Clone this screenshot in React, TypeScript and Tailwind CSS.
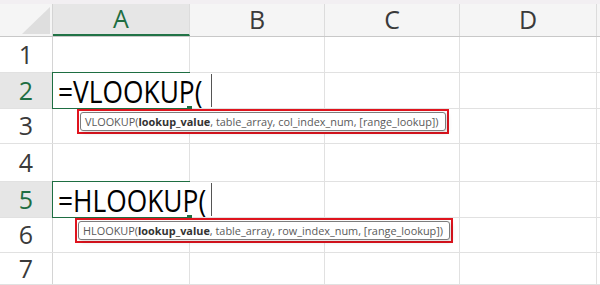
import React from "react";

const colWidths = ["w-[137px]", "w-[135px]", "w-[135px]", "w-[137px]"];
const letters = ["A", "B", "C", "D"];

type RowDef = {
  n: number;
  h: string;
  active?: boolean;
  formula?: string;
};

const rows: RowDef[] = [
  { n: 1, h: "h-[36px]" },
  { n: 2, h: "h-[36px]", active: true, formula: "=VLOOKUP(" },
  { n: 3, h: "h-[35px]" },
  { n: 4, h: "h-[38px]" },
  { n: 5, h: "h-[36px]", active: true, formula: "=HLOOKUP(" },
  { n: 6, h: "h-[35px]" },
  { n: 7, h: "h-[32px]" },
];

const uiFont = { fontFamily: "'Open Sans', 'Noto Sans', sans-serif" };

const Tooltip: React.FC<{ fn: string; third: string; className: string }> = ({ fn, third, className }) => (
  <div className={`absolute z-20 border-2 border-[#e0141e] p-[1px] bg-white ${className}`}>
    <div
      className="whitespace-nowrap rounded-[3px] border border-[#7d7d7d] bg-white pl-[4px] pr-[6px] text-[10.9px] leading-[17px] text-[#5a5a5a] shadow-[2px_2px_4px_rgba(0,0,0,0.15)]"
      style={uiFont}
    >
      {fn}(<span className="font-bold text-[#333]">lookup_value</span>, table_array, {third}, [range_lookup])
    </div>
  </div>
);

const App: React.FC = () => {
  return (
    <div className="relative h-[285px] w-[600px] overflow-hidden bg-white select-none">
      <div className="h-[4px] bg-[#f2eff2]" />

      {/* column headers */}
      <div className="flex h-[33px] border-b border-[#c8c8c8] bg-[#f5f5f5]">
        <div className="relative w-[53px] shrink-0 border-r border-[#d4d4d4]">
          <svg className="absolute right-[2px] bottom-[2px]" width="28" height="27" viewBox="0 0 28 27">
            <polygon points="28,0 28,27 0,27" fill="#dedede" />
          </svg>
        </div>
        {letters.map((l, i) => (
          <div
            key={l}
            className={`${colWidths[i]} shrink-0 flex items-center justify-center border-r border-[#dcdcdc] text-[25px] ${
              i === 0 ? "bg-[#e6e6e6] text-[#1e6e42] border-b-2 border-b-[#217346]" : "text-[#3a3a3a]"
            }`}
            style={uiFont}
          >
            {l}
          </div>
        ))}
        <div className="flex-1" />
      </div>

      {rows.map((r) => (
        <div key={r.n} className={`flex ${r.h} border-b border-[#e1e1e1]`}>
          <div
            className={`w-[53px] shrink-0 flex items-center justify-center border-r border-[#d4d4d4] text-[25px] ${
              r.active ? "bg-[#e6e6e6] text-[#1e6e42]" : "bg-white text-[#3a3a3a]"
            }`}
            style={uiFont}
          >
            {r.n}
          </div>
          <div className={`relative ${colWidths[0]} shrink-0 ${r.active ? "z-10" : "border-r border-[#e1e1e1]"}`}>
            {r.formula && (
              <>
                {/* active cell frame, right edge hidden under the overflowing text */}
                <div className="absolute left-[-1px] top-[-1px] bottom-[-1px] right-0 border-y border-l border-[#1e6e42]" />
                <div
                  className="absolute left-[5px] top-[1px] origin-left scale-x-[0.85] whitespace-nowrap text-[31px] leading-[34px] text-black"
                  style={uiFont}
                >
                  {r.formula}
                </div>
                <div className="absolute left-[158px] top-[1px] h-[33px] w-px bg-[#555]" />
                <div className="absolute right-[-2px] bottom-[-3px] h-[5px] w-[5px] bg-[#1e6e42]" />
              </>
            )}
          </div>
          {colWidths.slice(1).map((w, i) => (
            <div key={i} className={`${w} shrink-0 border-r border-[#e1e1e1]`} />
          ))}
          <div className="flex-1" />
        </div>
      ))}

      <Tooltip fn="VLOOKUP" third="col_index_num" className="left-[77px] top-[109px]" />
      <Tooltip fn="HLOOKUP" third="row_index_num" className="left-[75px] top-[218px]" />
    </div>
  );
};

export default App;
